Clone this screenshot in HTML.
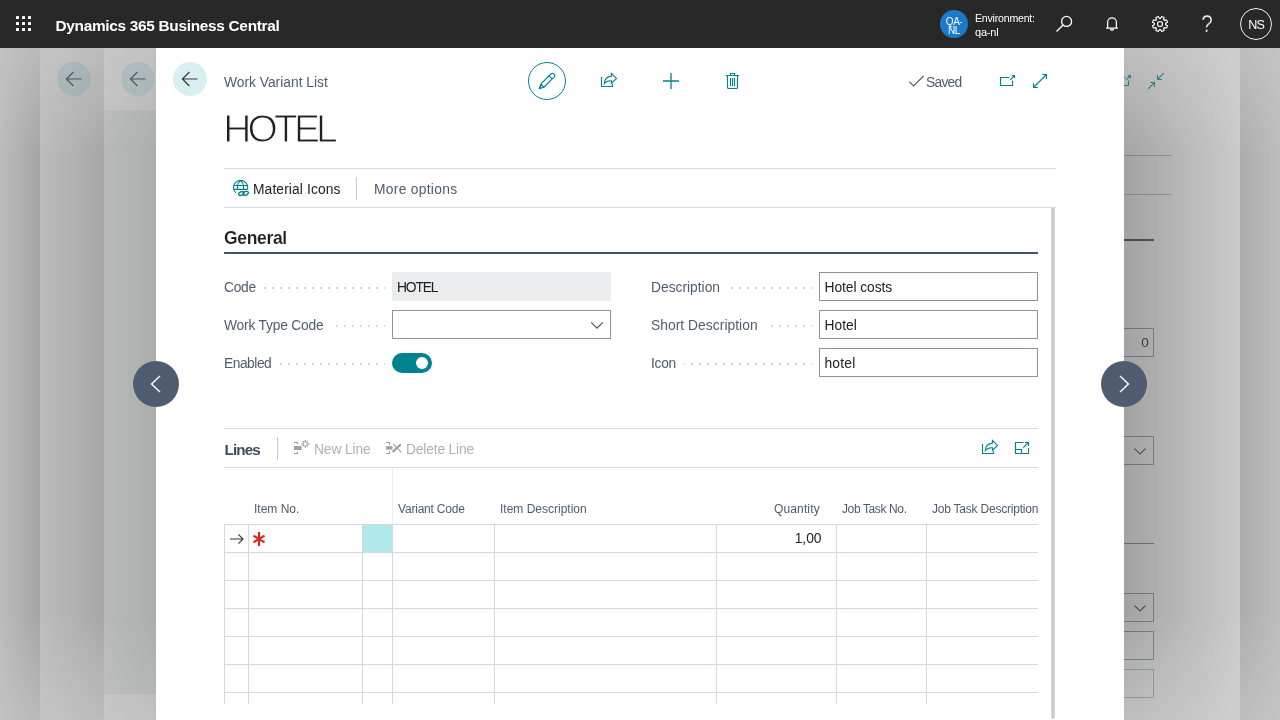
<!DOCTYPE html>
<html lang="en">
<head>
<meta charset="utf-8">
<title>HOTEL - Work Variant List - Dynamics 365 Business Central</title>
<style>
*{box-sizing:border-box;margin:0;padding:0}
html,body{width:1280px;height:720px;overflow:hidden;background:#b8b8b8;font-family:"Liberation Sans","DejaVu Sans",sans-serif;font-size:13.3px;color:#212121}
.abs{position:absolute}
#stage{position:relative;width:1280px;height:720px;overflow:hidden}
/* top bar */
#topbar{position:absolute;left:0;top:0;width:1280px;height:48px;background:#282828;color:#fff}
#topbar .brand{position:absolute;left:55.5px;top:17px;font-size:15.4px;font-weight:bold;letter-spacing:-0.3px;line-height:18px;white-space:nowrap}
#topbar svg{position:absolute;overflow:visible}
.env-av{position:absolute;left:940px;top:10px;width:28px;height:28px;border-radius:50%;background:#1b7acc;color:#fff;font-size:10px;line-height:8.6px;text-align:center;padding-top:8.2px;letter-spacing:-0.5px}
.env-t{position:absolute;left:975px;font-size:11px;line-height:14px;white-space:nowrap;color:#fff;letter-spacing:-0.2px}
.user{position:absolute;left:1240px;top:8px;width:32px;height:32px;border-radius:50%;border:1px solid #f0f0f0;color:#fff;font-size:12.6px;line-height:33px;text-align:center;letter-spacing:-0.7px;padding-left:0.5px}
/* background layers */
.layer{position:absolute;top:48px;height:672px}
#main{position:absolute;left:156px;top:48px;width:968px;height:672px;background:#fff}
.backbtn{position:absolute;width:34px;height:34px;border-radius:50%;top:62px}
.backbtn svg{position:absolute;left:8px;top:9px}
.cap{color:#505c6d}
.hline{position:absolute;height:1px;background:#d7dae0}
.lbl{position:absolute;left:0;top:1px;height:20px;line-height:20px;color:#505c6d;white-space:nowrap;background:#fff;padding-right:8px;font-size:13.8px}
.row{position:absolute;height:22px;width:161px;background-image:linear-gradient(90deg,#d3d7dc 2px,rgba(255,255,255,0) 2px);background-size:8px 2px;background-repeat:repeat-x;background-position:0 10px}
.inp{position:absolute;width:219px;height:29px;border:1px solid #8a93a1;background:#fff;font-size:13.8px;line-height:28px;padding-top:1px;padding-left:4.5px;color:#212121;white-space:nowrap}
.th{position:absolute;top:499px;height:20px;line-height:20px;font-size:12px;color:#505c6d;white-space:nowrap}
.vl{position:absolute;width:1px;background:#d5d8de;top:524px;height:180px}
.hl{position:absolute;height:1px;background:#d5d8de;left:224px;width:814px}
.shade{position:absolute;left:0;top:0;width:100%;height:100%;-webkit-mask-image:linear-gradient(to bottom,rgba(0,0,0,.42) 0,#000 16%,#000 84%,rgba(0,0,0,.42) 100%);mask-image:linear-gradient(to bottom,rgba(0,0,0,.42) 0,#000 16%,#000 84%,rgba(0,0,0,.42) 100%)}
.bgf{border:1px solid #8e939b}
#fg{position:absolute;left:0;top:0;width:1280px;height:720px;will-change:transform}
</style>
</head>
<body>
<div id="stage">

<!-- BACKGROUND LAYERS -->
<div class="layer" style="left:0;width:40px;background:#c8c8c8"><div class="shade" style="background:linear-gradient(90deg,rgba(0,0,0,.06),rgba(0,0,0,.175))"></div></div>
<div class="layer" style="left:40px;width:64px;background:#cccccc"><div class="shade" style="background:linear-gradient(90deg,rgba(0,0,0,.074),rgba(0,0,0,.186))"></div></div>
<div class="layer" style="left:104px;width:52px;background:#cbcbcb">
  <div class="abs" style="left:0;top:62px;width:52px;height:584px;background:#c1c3c2"></div>
  <div class="shade" style="background:linear-gradient(90deg,rgba(0,0,0,.045),rgba(0,0,0,.11))"></div>
</div>
<div class="layer" style="left:1124px;width:116px;background:#d2d2d2">
  <div class="abs" style="left:0;top:107px;width:48px;height:1px;background:#a9a9a9"></div>
  <div class="abs" style="left:0;top:146px;width:48px;height:1px;background:#a9a9a9"></div>
  <div class="abs" style="left:0;top:191px;width:30px;height:2px;background:#55606f"></div>
  <div class="abs bgf" style="left:-1px;top:280px;width:31px;height:29px;text-align:right;padding-right:4.3px;font-size:13.6px;line-height:28px;color:#4b4b4b;will-change:transform">0</div>
  <div class="abs bgf" style="left:-1px;top:388px;width:31px;height:29px"><svg class="abs" style="left:8.5px;top:10px" width="14" height="9" viewBox="0 0 14 9"><path d="M1.5 1.5 L7 7 L12.5 1.5" fill="none" stroke="#5f6672" stroke-width="1.1"/></svg></div>
  <div class="abs" style="left:0;top:495px;width:30px;height:1px;background:#7b838f"></div>
  <div class="abs bgf" style="left:-1px;top:545px;width:31px;height:29px"><svg class="abs" style="left:8.5px;top:10px" width="14" height="9" viewBox="0 0 14 9"><path d="M1.5 1.5 L7 7 L12.5 1.5" fill="none" stroke="#5f6672" stroke-width="1.1"/></svg></div>
  <div class="abs bgf" style="left:-1px;top:583px;width:31px;height:29px"></div>
  <div class="abs bgf" style="left:-1px;top:621px;width:31px;height:29px;border-color:#a3a8af"></div>
  <div class="shade" style="background:linear-gradient(90deg,rgba(0,0,0,.224),rgba(0,0,0,.03))"></div>
</div>
<div class="layer" style="left:1240px;width:40px;background:#cacaca"><div class="shade" style="background:linear-gradient(90deg,rgba(0,0,0,.144),rgba(0,0,0,.064))"></div></div>

<!-- MAIN PANEL -->
<div id="main"></div>

<div id="fg">
<!-- BACK BUTTONS ON STACKED PAGES -->
<div class="backbtn" style="left:57px;background:rgba(0,128,137,.10)"><svg width="18" height="16" viewBox="0 0 18 16"><path d="M16.5 8 H1.6 M8.4 1 L1.4 8 L8.4 15" fill="none" stroke="#555" stroke-width="1.2"/></svg></div>
<div class="backbtn" style="left:121px;background:rgba(0,128,137,.10)"><svg width="18" height="16" viewBox="0 0 18 16"><path d="M16.5 8 H1.6 M8.4 1 L1.4 8 L8.4 15" fill="none" stroke="#555" stroke-width="1.2"/></svg></div>
<!-- right-side icons of page behind -->
<svg class="abs" style="left:1124px;top:72px" width="44" height="20" viewBox="0 0 44 20" fill="none" stroke="#2f7d84" stroke-width="1.1">
  <path d="M-1 5.5 H1.2 M4.5 8.5 V13.5 H-1 M2.2 7.8 L6.5 3.5 M3.8 3.5 H6.5 V6.2"/>
  <path d="M24.2 16.8 L30.5 10.5 M26.1 10.5 H30.5 V14.9 M39.8 1.2 L33.5 7.5 M33.5 3.1 V7.5 H37.9"/>
</svg>

<!-- MAIN PANEL CONTENT -->
<div class="backbtn" style="left:173px;background:#d9f0f2"><svg width="18" height="16" viewBox="0 0 18 16"><path d="M16.5 8 H1.6 M8.4 1 L1.4 8 L8.4 15" fill="none" stroke="#3a3a3a" stroke-width="1.2"/></svg></div>
<div class="abs cap" id="crumb" style="left:224px;top:73px;font-size:13.8px;line-height:20px;white-space:nowrap;letter-spacing:0px">Work Variant List</div>
<div class="abs" id="title" style="left:223.3px;top:105px;font-size:39px;line-height:48px;color:#212121;white-space:nowrap;letter-spacing:-3.9px;-webkit-text-stroke:1.1px #fff">HOTEL</div>

<!-- toolbar icons -->
<div class="abs" style="left:528px;top:62px;width:38px;height:38px;border:1px solid #00838e;border-radius:50%"></div>
<svg class="abs" id="ic-pencil" style="left:537px;top:71px" width="20" height="20" viewBox="0 0 20 20" fill="none" stroke="#00838e" stroke-width="1.15" stroke-linejoin="round">
  <path d="M2.3 17.7 L3.78 13.10 L13.89 2.99 A2.2 2.2 0 0 1 17.01 6.11 L6.90 16.22 Z M3.78 13.10 L6.90 16.22 M12.05 4.83 L15.17 7.95"/>
  <path d="M2.3 17.7 L3.2 14.9 L5.1 16.8 Z" fill="#00838e" stroke="none"/>
</svg>
<svg class="abs" id="ic-share" style="left:599px;top:71px" width="20" height="18" viewBox="0 0 20 18" fill="none" stroke="#00838e" stroke-width="1.15" stroke-linejoin="miter">
  <path d="M2.5 5.9 V15.5 H13.5 V13"/>
  <path d="M12.4 2.3 L17.5 7.4 L12.4 12.4 V9.8 C9.2 9.6 6.9 10.4 5.3 12.5 C5.6 8.4 8 5.5 12.4 5.1 Z" stroke-linejoin="miter"/>
</svg>
<svg class="abs" id="ic-plus" style="left:662px;top:72px" width="18" height="18" viewBox="0 0 18 18" fill="none" stroke="#00838e" stroke-width="1.3">
  <path d="M9 1 V17 M1 9 H17"/>
</svg>
<svg class="abs" id="ic-trash" style="left:724px;top:71px" width="18" height="20" viewBox="0 0 18 20" fill="none" stroke="#00838e" stroke-width="1.15">
  <path d="M2 4.5 H15 M6.5 4.5 V2.5 H10.5 V4.5 M3.5 4.5 V16.2 a1.3 1.3 0 0 0 1.3 1.3 H12.2 a1.3 1.3 0 0 0 1.3 -1.3 V4.5 M6.5 7 V15 M8.5 7 V15 M10.5 7 V15"/>
</svg>

<!-- saved + window icons -->
<svg class="abs" style="left:908px;top:75px" width="18" height="13" viewBox="0 0 18 13" fill="none" stroke="#505c6d" stroke-width="1.15"><path d="M1.2 6.6 L5.6 11 L15.6 1"/></svg>
<div class="abs cap" id="saved" style="left:926px;top:73px;font-size:13.8px;line-height:20px;letter-spacing:-0.75px">Saved</div>
<svg class="abs" id="ic-pop" style="left:999px;top:73px" width="18" height="15" viewBox="0 0 18 15" fill="none" stroke="#00838e" stroke-width="1.15">
  <path d="M10.2 4.5 H1.5 V12.5 H13.5 V7.5 M11.2 6.8 L15.5 2.5 M12.8 2.5 H15.5 V5.2"/>
</svg>
<svg class="abs" id="ic-exp" style="left:1031px;top:72px" width="18" height="18" viewBox="0 0 18 18" fill="none" stroke="#00838e" stroke-width="1.15">
  <path d="M2.5 15.5 L15.5 2.5 M11.2 2.5 H15.5 V6.9 M2.5 11.2 V15.5 H6.8"/>
</svg>

<div class="hline" style="left:224px;top:168px;width:832px"></div>
<div class="hline" style="left:224px;top:207px;width:832px"></div>

<!-- action bar -->
<svg class="abs" id="ic-globe" style="left:232px;top:180px" width="18" height="18" viewBox="0 0 18 18" fill="none" stroke="#00838e" stroke-width="1.1">
  <path d="M4.04 12.94 A7.1 7.1 0 1 1 15.46 9.34"/>
  <path d="M1.9 5.5 H15.3 M1.8 9.4 H15.4 M5.5 9.4 V5.5 Q5.9 2.4 8.6 0.5 Q11.3 2.4 11.5 5.5 V9.4"/>
  <ellipse cx="9.4" cy="13.5" rx="2.8" ry="1.8" stroke-width="1.35" transform="rotate(-20 9.4 13.5)"/>
  <ellipse cx="13.6" cy="13.3" rx="2.8" ry="1.8" stroke-width="1.35" transform="rotate(-20 13.6 13.3)"/>
</svg>
<div class="abs" id="act1" style="left:253px;top:180px;font-size:13.8px;line-height:20px;color:#212121;white-space:nowrap;letter-spacing:0.12px">Material Icons</div>
<div class="abs" style="left:356px;top:177px;width:1px;height:23px;background:#c6cad1"></div>
<div class="abs cap" id="act2" style="left:374px;top:180px;font-size:13.8px;line-height:20px;white-space:nowrap;letter-spacing:0.3px">More options</div>

<!-- GENERAL GROUP -->
<div class="abs" id="gen" style="left:224px;top:226px;font-size:17.5px;font-weight:bold;line-height:24px;color:#212121;letter-spacing:-0.33px;-webkit-text-stroke:0.12px #fff">General</div>
<div class="abs" style="left:224px;top:252px;width:814px;height:2px;background:#45546a"></div>
<div class="row" style="left:224px;top:277px"><span class="lbl" id="lb0" style="letter-spacing:-0.3px">Code</span></div>
<div class="row" style="left:224px;top:315px"><span class="lbl" id="lb1" style="letter-spacing:-0.2px">Work Type Code</span></div>
<div class="row" style="left:224px;top:353px"><span class="lbl" id="lb2" style="letter-spacing:-0.48px">Enabled</span></div>
<div class="row" style="left:651px;top:277px"><span class="lbl" id="lb3" style="letter-spacing:0px">Description</span></div>
<div class="row" style="left:651px;top:315px"><span class="lbl" id="lb4" style="letter-spacing:0.05px">Short Description</span></div>
<div class="row" style="left:651px;top:353px"><span class="lbl" id="lb5" style="letter-spacing:-0.3px">Icon</span></div>
<div class="inp" id="f-code" style="letter-spacing:-1.15px;padding-left:4px;left:392px;top:272px;border-color:#ebecee;background:#ebecee">HOTEL</div>
<div class="inp" id="f-wtc" style="left:392px;top:310px"><svg class="abs" style="left:196.5px;top:10.1px" width="14" height="9" viewBox="0 0 14 9"><path d="M1.2 1.4 L7 7.2 L12.8 1.4" fill="none" stroke="#4a4a4a" stroke-width="1.1"/></svg></div>
<div class="abs" id="toggle" style="left:392px;top:353px;width:40px;height:20px;border-radius:10px;background:#00838e"><div class="abs" style="left:24px;top:4px;width:12px;height:12px;border-radius:50%;background:#fff"></div></div>
<div class="inp" id="f-desc" style="left:819px;top:272px;letter-spacing:-0.05px">Hotel costs</div>
<div class="inp" id="f-sdesc" style="left:819px;top:310px;letter-spacing:0px">Hotel</div>
<div class="inp" id="f-icon" style="left:819px;top:348px;letter-spacing:0.2px">hotel</div>

<!-- LINES PART -->
<div class="hline" style="left:224px;top:428px;width:814px"></div>
<div class="hline" style="left:224px;top:467px;width:814px"></div>
<div class="abs" id="lines" style="left:224.5px;top:438px;font-size:15.2px;font-weight:bold;line-height:24px;color:#3f4c60;letter-spacing:-0.85px">Lines</div>
<div class="abs" style="left:277px;top:437px;width:1px;height:23px;background:#c6cad1"></div>
<svg class="abs" id="ic-newline" style="left:293px;top:439px" width="18" height="16" viewBox="0 0 18 16" fill="none" stroke="#9e9e9e" stroke-width="1">
  <path d="M1 3.5 H5 M4.5 3 V5.3 M1 14.5 H5 M4.5 15 V12.7"/>
  <rect x="1" y="7" width="7.6" height="4" fill="#a2a2a2" stroke="none"/>
  <path d="M12.3 0.9 V3.4 M12.3 6.2 V8.7 M8.3 4.8 H10.9 M13.7 4.8 H16.5 M9.75 2.25 L11.17 3.67 M13.43 5.93 L14.85 7.35 M14.85 2.25 L13.43 3.67 M11.17 5.93 L9.75 7.35" stroke="#959595" stroke-width="1.15"/>
</svg>
<div class="abs" id="newline" style="left:314px;top:440px;font-size:13.8px;line-height:20px;color:#abb2bc;white-space:nowrap;letter-spacing:-0.12px">New Line</div>
<svg class="abs" id="ic-delline" style="left:385px;top:439px" width="18" height="16" viewBox="0 0 18 16" fill="none" stroke="#9e9e9e" stroke-width="1">
  <path d="M1 3.5 H5 M4.5 3 V6 M1 14.5 H5 M4.5 15 V12"/>
  <rect x="1" y="7.1" width="6.5" height="3.5" fill="#a2a2a2" stroke="none"/>
  <path d="M7.6 12.9 L15.8 5.2" stroke-width="2.1" stroke="#9a9a9a"/>
  <path d="M8.2 4.9 L16.4 13.3" stroke-width="1.15"/>
</svg>
<div class="abs" id="delline" style="left:406px;top:440px;font-size:13.8px;line-height:20px;color:#abb2bc;white-space:nowrap;letter-spacing:-0.16px">Delete Line</div>
<svg class="abs" id="ic-share2" style="left:980px;top:438px" width="20" height="18" viewBox="0 0 20 18" fill="none" stroke="#00838e" stroke-width="1.1">
  <path d="M2.5 5.9 V15.5 H13.5 V13"/>
  <path d="M12.4 2.3 L17.5 7.4 L12.4 12.4 V9.8 C9.2 9.6 6.9 10.4 5.3 12.5 C5.6 8.4 8 5.5 12.4 5.1 Z" stroke-linejoin="miter"/>
</svg>
<svg class="abs" id="ic-pop2" style="left:1013px;top:440px" width="18" height="16" viewBox="0 0 18 16" fill="none" stroke="#00838e" stroke-width="1.1">
  <path d="M10.4 2.5 H2.5 V13.5 H15.5 V8 M2.5 9.5 H8.5 V13.5 M10.3 7.7 L15.5 2.5 M12 2.5 H15.5 V6"/>
</svg>

<!-- GRID -->
<div class="abs" style="left:392px;top:468px;width:1px;height:56px;background:#ecedf0"></div>
<div class="th" id="th0" style="left:254px">Item No.</div>
<div class="th" id="th1" style="left:398px;letter-spacing:-0.2px">Variant Code</div>
<div class="th" id="th2" style="left:500px">Item Description</div>
<div class="th" id="th3" style="left:720px;width:99.8px;text-align:right;letter-spacing:0.14px">Quantity</div>
<div class="th" id="th4" style="left:842px;letter-spacing:-0.38px">Job Task No.</div>
<div class="th" id="th5" style="left:932px;width:106px;overflow:hidden;letter-spacing:-0.22px">Job Task Description</div>
<div class="abs" style="left:363px;top:525px;width:29px;height:27px;background:#b1e8ec"></div>
<div class="hl" style="top:524px"></div>
<div class="hl" style="top:552px"></div>
<div class="hl" style="top:580px"></div>
<div class="hl" style="top:608px"></div>
<div class="hl" style="top:636px"></div>
<div class="hl" style="top:664px"></div>
<div class="hl" style="top:692px"></div>
<div class="vl" style="left:224px"></div>
<div class="vl" style="left:248px"></div>
<div class="vl" style="left:362px"></div>
<div class="vl" style="left:392px"></div>
<div class="vl" style="left:494px"></div>
<div class="vl" style="left:716px"></div>
<div class="vl" style="left:836px"></div>
<div class="vl" style="left:926px"></div>
<svg class="abs" id="ic-rowarrow" style="left:229px;top:531.5px" width="16" height="14" viewBox="0 0 16 14" fill="none" stroke="#333" stroke-width="1.1"><path d="M1 7 H14 M9.4 2.4 L14 7 L9.4 11.6"/></svg>
<svg class="abs" id="ic-star" style="left:252px;top:532px" width="15" height="15" viewBox="0 0 15 15" fill="none" stroke="#e2231a" stroke-width="2.15"><path d="M7 0.1 V13.9 M1.5 3.7 L12.5 10.3 M12.5 3.7 L1.5 10.3"/></svg>
<div class="abs" id="qty" style="left:720px;top:529px;width:101.5px;text-align:right;font-size:13.8px;line-height:20px;color:#212121">1,00</div>

<!-- scrollbar -->
<div class="abs" style="left:1051px;top:208px;width:4px;height:510.5px;background:linear-gradient(90deg,#dedede,#cbcbcb 30%,#cbcbcb 70%,#dedede);border-radius:0 0 2px 2px"></div>

<!-- prev / next record -->
<div class="abs" style="left:133px;top:361px;width:46px;height:46px;border-radius:50%;background:#4f5b6e"><svg class="abs" style="left:16px;top:13px" width="14" height="20" viewBox="0 0 14 20" fill="none" stroke="#fff" stroke-width="1.4"><path d="M11 2 L2.6 10 L11 18"/></svg></div>
<div class="abs" style="left:1101px;top:361px;width:46px;height:46px;border-radius:50%;background:#4f5b6e"><svg class="abs" style="left:16px;top:13px" width="14" height="20" viewBox="0 0 14 20" fill="none" stroke="#fff" stroke-width="1.4"><path d="M3 2 L11.4 10 L3 18"/></svg></div>

<!-- TOP BAR -->
<div id="topbar">
<svg style="left:16px;top:16px" width="15" height="15" viewBox="0 0 15 15" fill="#fff"><rect x="0" y="0" width="3" height="3" rx="0.6"/><rect x="6" y="0" width="3" height="3" rx="0.6"/><rect x="12" y="0" width="3" height="3" rx="0.6"/><rect x="0" y="6" width="3" height="3" rx="0.6"/><rect x="6" y="6" width="3" height="3" rx="0.6"/><rect x="12" y="6" width="3" height="3" rx="0.6"/><rect x="0" y="12" width="3" height="3" rx="0.6"/><rect x="6" y="12" width="3" height="3" rx="0.6"/><rect x="12" y="12" width="3" height="3" rx="0.6"/></svg>
  <svg id="ic-search" style="left:1055px;top:15px" width="18" height="18" viewBox="0 0 18 18" fill="none" stroke="#fff" stroke-width="1.3"><circle cx="11.6" cy="6.4" r="5"/><path d="M8.06 9.94 L1.5 16.5"/></svg>
  <svg id="ic-bell" style="left:1104px;top:15px" width="16" height="18" viewBox="0 0 16 18" fill="none" stroke="#fff" stroke-width="1.25" stroke-linejoin="round"><path d="M3.6 13.2 V7.2 a4.4 4.4 0 0 1 8.8 0 V13.2 M2 13.2 H14 M6.4 14 a1.7 1.7 0 0 0 3.2 0"/></svg>
  <svg id="ic-gear" style="left:1151px;top:15px" width="18" height="18" viewBox="0 0 18 18" fill="none" stroke="#fff" stroke-width="1.15" stroke-linejoin="round">
    <circle cx="9" cy="9" r="2.5"/>
    <path d="M9.70 3.34 L10.70 1.49 L13.11 2.49 L12.51 4.51 L13.49 5.49 L15.51 4.89 L16.51 7.30 L14.66 8.30 L14.66 9.70 L16.51 10.70 L15.51 13.11 L13.49 12.51 L12.51 13.49 L13.11 15.51 L10.70 16.51 L9.70 14.66 L8.30 14.66 L7.30 16.51 L4.89 15.51 L5.49 13.49 L4.51 12.51 L2.49 13.11 L1.49 10.70 L3.34 9.70 L3.34 8.30 L1.49 7.30 L2.49 4.89 L4.51 5.49 L5.49 4.51 L4.89 2.49 L7.30 1.49 L8.30 3.34 Z"/>
  </svg>
  <div class="abs" id="ic-help" style="transform:scale(0.92,1.06);left:1200.2px;top:13.4px;width:14px;height:24px;font-size:22.6px;line-height:24px;text-align:center;color:#fff;-webkit-text-stroke:0.38px #282828">?</div>
  <div class="brand">Dynamics 365 Business Central</div>
  <div class="env-av">QA-<br>NL</div>
  <div class="env-t" style="top:10.5px;font-size:10.6px;letter-spacing:-0.22px">Environment:</div>
  <div class="env-t" style="top:25px">qa-nl</div>
  <div class="user">NS</div>
</div>

</div>
</div>
</body>
</html>
